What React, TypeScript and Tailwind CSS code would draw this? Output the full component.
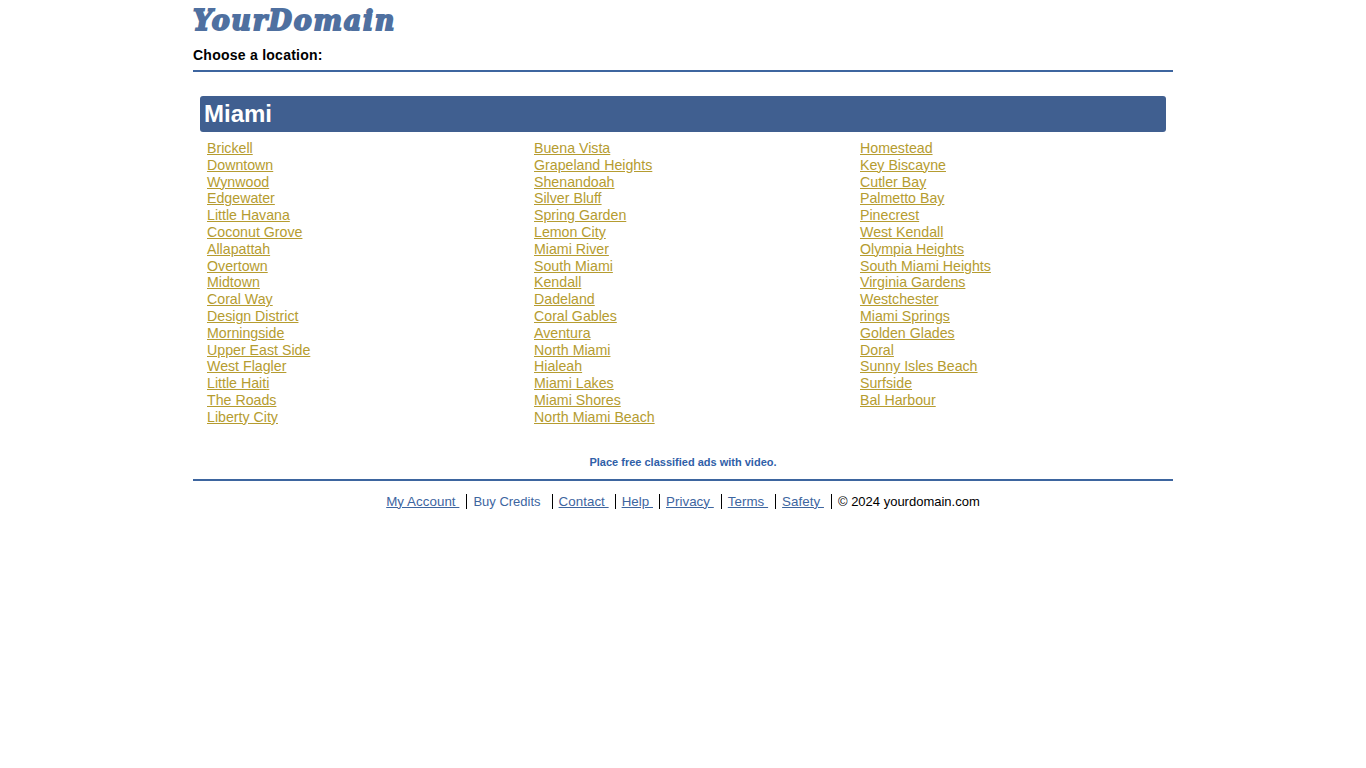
const c1 = ["Brickell","Downtown","Wynwood","Edgewater","Little Havana","Coconut Grove","Allapattah","Overtown","Midtown","Coral Way","Design District","Morningside","Upper East Side","West Flagler","Little Haiti","The Roads","Liberty City"];
const c2 = ["Buena Vista","Grapeland Heights","Shenandoah","Silver Bluff","Spring Garden","Lemon City","Miami River","South Miami","Kendall","Dadeland","Coral Gables","Aventura","North Miami","Hialeah","Miami Lakes","Miami Shores","North Miami Beach"];
const c3 = ["Homestead","Key Biscayne","Cutler Bay","Palmetto Bay","Pinecrest","West Kendall","Olympia Heights","South Miami Heights","Virginia Gardens","Westchester","Miami Springs","Golden Glades","Doral","Sunny Isles Beach","Surfside","Bal Harbour"];
const footer = ["My Account ","Buy Credits","Contact ","Help ","Privacy ","Terms ","Safety "];

function Col({ items, w }: { items: string[]; w: string }) {
  return (
    <ul className={`${w} flex flex-col`}>
      {items.map((n) => (
        <li key={n} className="h-[16.8px] leading-[16.8px]">
          <a href="#" className="text-[#b59c30] underline">{n}</a>
        </li>
      ))}
    </ul>
  );
}

export default function App() {
  return (
    <div className="w-[980px] mx-auto font-['Liberation_Sans',Arial,sans-serif] text-black bg-white">
      <div className="h-[41px] pt-[3px] font-['DejaVu_Serif',serif] font-bold italic text-[27px] leading-[36px] tracking-[1.7px] [-webkit-text-stroke:1.8px_#4f70a0] text-[#4f70a0] whitespace-nowrap">
        YourDomain
      </div>
      <div className="h-[31px] border-b-2 border-[#3d659f] text-[14px] font-bold leading-[16px] pt-[6px] tracking-[0.25px]">
        Choose a location:
      </div>
      <div className="px-[7px] pt-[24px]">
        <h1 className="h-[36px] bg-[#405f90] rounded-[3px] text-white text-[24px] font-bold leading-[36px] pl-[4px]">Miami</h1>
        <div className="flex pl-[7px] pt-[8px] text-[14.2px]">
          <Col items={c1} w="w-[327px]" />
          <Col items={c2} w="w-[326px]" />
          <Col items={c3} w="w-[306px]" />
        </div>
      </div>
      <div className="pt-[30px] h-[53px] text-center text-[11px] font-bold leading-[13px] text-[#3060a8]">
        Place free classified ads with video.
      </div>
      <div className="border-t-2 border-[#3d659f] pt-[13px] flex justify-center text-[13.33px] tracking-[0.05px] leading-[15px] text-[#3d659f]">
        {footer.map((f, i) => (
          <span key={f} className={i === 0 ? "pr-[7px]" : i >= 4 ? "border-l border-black pl-[6px] pr-[7px]" : "border-l border-black px-[6px]"}>
            {i === 1 ? <span className="whitespace-pre text-[13px] tracking-normal pr-[5px]">{f}</span> : <a href="#" className="underline whitespace-pre">{f}</a>}
          </span>
        ))}
        <span className="border-l border-black pl-[6px] text-black text-[13px] tracking-normal">© 2024 yourdomain.com</span>
      </div>
    </div>
  );
}
